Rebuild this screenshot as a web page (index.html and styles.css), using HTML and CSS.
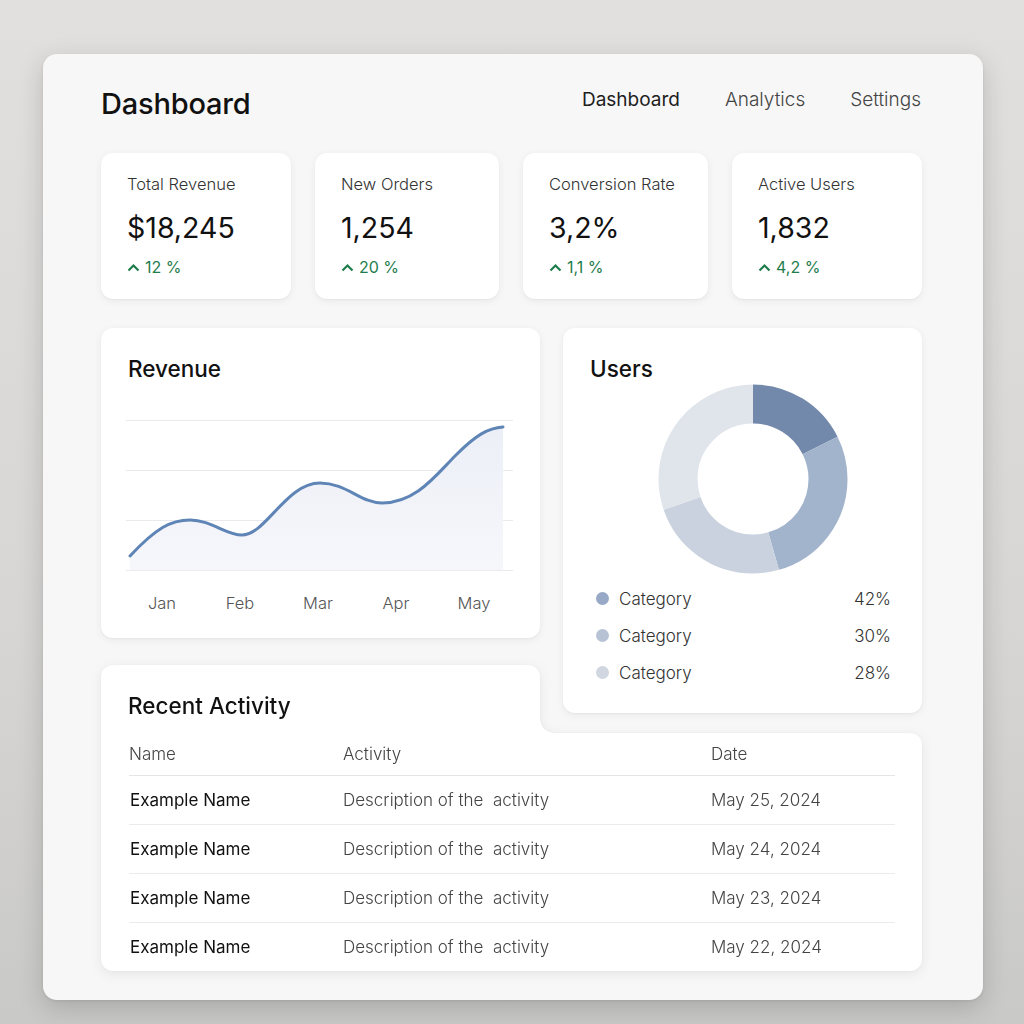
FILE: index.html
```html
<!DOCTYPE html>
<html lang="en">
<head>
<meta charset="utf-8">
<title>Dashboard</title>
<link rel="stylesheet" href="styles.css">
</head>
<body>
<div class="panel">
  <header class="top">
    <h1 class="title">Dashboard</h1>
    <nav class="nav">
      <span class="nav-item active">Dashboard</span>
      <span class="nav-item">Analytics</span>
      <span class="nav-item">Settings</span>
    </nav>
  </header>

  <section class="stats">
    <div class="stat">
      <div class="stat-label">Total Revenue</div>
      <div class="stat-value">$18,245</div>
      <div class="stat-change"><svg class="chev" width="13" height="9" viewBox="0 0 13 9"><polyline points="1.5,7.5 6.5,2.5 11.5,7.5" fill="none" stroke="currentColor" stroke-width="2.2"/></svg><span>12 %</span></div>
    </div>
    <div class="stat">
      <div class="stat-label">New Orders</div>
      <div class="stat-value">1,254</div>
      <div class="stat-change"><svg class="chev" width="13" height="9" viewBox="0 0 13 9"><polyline points="1.5,7.5 6.5,2.5 11.5,7.5" fill="none" stroke="currentColor" stroke-width="2.2"/></svg><span>20 %</span></div>
    </div>
    <div class="stat">
      <div class="stat-label">Conversion Rate</div>
      <div class="stat-value">3,2%</div>
      <div class="stat-change"><svg class="chev" width="13" height="9" viewBox="0 0 13 9"><polyline points="1.5,7.5 6.5,2.5 11.5,7.5" fill="none" stroke="currentColor" stroke-width="2.2"/></svg><span>1,1 %</span></div>
    </div>
    <div class="stat">
      <div class="stat-label">Active Users</div>
      <div class="stat-value">1,832</div>
      <div class="stat-change"><svg class="chev" width="13" height="9" viewBox="0 0 13 9"><polyline points="1.5,7.5 6.5,2.5 11.5,7.5" fill="none" stroke="currentColor" stroke-width="2.2"/></svg><span>4,2 %</span></div>
    </div>
  </section>

  <section class="content">
    <div class="card revenue">
      <h2 class="card-title">Revenue</h2>
      <svg class="chart" width="387" height="165" viewBox="0 0 387 165">
        <defs>
          <linearGradient id="area" x1="0" y1="0" x2="0" y2="1">
            <stop offset="0" stop-color="#eceff7"/>
            <stop offset="1" stop-color="#f6f7fb"/>
          </linearGradient>
        </defs>
        <line x1="0" y1="10.5" x2="387" y2="10.5" class="grid"/>
        <line x1="0" y1="60.5" x2="387" y2="60.5" class="grid"/>
        <line x1="0" y1="110.5" x2="387" y2="110.5" class="grid"/>
        <path d="M4,146 C30,118 45,110 64,110 C85,110 100,125 116,125 C140,125 160,73 194,73 C220,73 235,93 256,93 C290,93 310,65 330,45 C350,25 362,18 377,17 L377,160 L4,160 Z" fill="url(#area)"/>
        <line x1="0" y1="160.5" x2="387" y2="160.5" class="grid"/>
        <path d="M4,146 C30,118 45,110 64,110 C85,110 100,125 116,125 C140,125 160,73 194,73 C220,73 235,93 256,93 C290,93 310,65 330,45 C350,25 362,18 377,17" fill="none" stroke="#5f84b6" stroke-width="3" stroke-linecap="round"/>
      </svg>
      <div class="months">
        <span>Jan</span><span>Feb</span><span>Mar</span><span>Apr</span><span>May</span>
      </div>
    </div>

    <div class="card users">
      <h2 class="card-title">Users</h2>
      <svg class="donut" width="190" height="190" viewBox="0 0 190 190">
        <g transform="rotate(-90 95 95)" fill="none" stroke-width="39">
          <circle cx="95" cy="95" r="75" pathLength="360" stroke="#7389ab" stroke-dasharray="63.4 296.6" stroke-dashoffset="0"/>
          <circle cx="95" cy="95" r="75" pathLength="360" stroke="#a2b3cc" stroke-dasharray="100.6 259.4" stroke-dashoffset="-63.4"/>
          <circle cx="95" cy="95" r="75" pathLength="360" stroke="#c9d2de" stroke-dasharray="87 273" stroke-dashoffset="-164"/>
          <circle cx="95" cy="95" r="75" pathLength="360" stroke="#e0e4eb" stroke-dasharray="109 251" stroke-dashoffset="-251"/>
        </g>
      </svg>
      <div class="legend">
        <div class="legend-row"><span class="dot d1"></span><span>Category</span><span class="pct">42%</span></div>
        <div class="legend-row"><span class="dot d2"></span><span>Category</span><span class="pct">30%</span></div>
        <div class="legend-row"><span class="dot d3"></span><span>Category</span><span class="pct">28%</span></div>
      </div>
    </div>

    <div class="activity">
      <div class="activity-head">
        <h2 class="card-title">Recent Activity</h2>
      </div>
      <div class="activity-body">
        <table class="table">
          <colgroup><col class="c1"><col class="c2"><col class="c3"></colgroup>
          <thead>
            <tr><th>Name</th><th>Activity</th><th>Date</th></tr>
          </thead>
          <tbody>
            <tr><td class="name">Example Name</td><td>Description of the&nbsp; activity</td><td>May 25, 2024</td></tr>
            <tr><td class="name">Example Name</td><td>Description of the&nbsp; activity</td><td>May 24, 2024</td></tr>
            <tr><td class="name">Example Name</td><td>Description of the&nbsp; activity</td><td>May 23, 2024</td></tr>
            <tr><td class="name">Example Name</td><td>Description of the&nbsp; activity</td><td>May 22, 2024</td></tr>
          </tbody>
        </table>
      </div>
    </div>
  </section>
</div>
</body>
</html>
```

FILE: styles.css
```css
html, body {
  margin: 0;
  padding: 0;
}

body {
  width: 1024px;
  height: 1024px;
  overflow: hidden;
  box-sizing: border-box;
  padding: 54px 0 0 43px;
  background: linear-gradient(180deg, #e1e0df 0%, #d7d6d5 60%, #c9c9c8 100%);
  font-family: Inter, "Noto Sans", "Liberation Sans", sans-serif;
  color: #111;
}

.panel {
  width: 940px;
  height: 946px;
  box-sizing: border-box;
  padding: 30px 61px 0 58px;
  background: #f7f7f7;
  border-radius: 14px;
  box-shadow: 0 8px 26px rgba(0, 0, 0, 0.17), 0 1px 3px rgba(0, 0, 0, 0.08);
}

/* Header */
.top {
  display: flex;
  justify-content: space-between;
  align-items: flex-start;
  height: 40px;
  margin-bottom: 29px;
}

.title {
  margin: 0;
  font-size: 29px;
  line-height: 40px;
  font-weight: 500;
  color: #111;
  letter-spacing: -0.2px;
}

.nav {
  display: flex;
  gap: 45px;
  padding-top: 1px;
  margin-right: 1px;
  font-size: 19px;
  line-height: 30px;
  font-weight: 300;
  color: #444;
}

.nav-item.active {
  color: #1e1e1e;
  font-weight: 400;
}

/* Stat cards */
.stats {
  display: grid;
  grid-template-columns: 190px 184px 185px 190px;
  gap: 24px;
}

.stat {
  height: 146px;
  box-sizing: border-box;
  padding: 20px 16px 0 26px;
  background: #fff;
  border-radius: 12px;
  box-shadow: 0 2px 8px rgba(0, 0, 0, 0.06), 0 1px 2px rgba(0, 0, 0, 0.04);
}

.stat-label {
  font-size: 16.5px;
  line-height: 22px;
  font-weight: 300;
  color: #333;
}

.stat-value {
  margin-top: 15px;
  font-size: 28.5px;
  line-height: 36px;
  font-weight: 400;
  color: #111;
}

.stat-change {
  margin-top: 11px;
  display: flex;
  align-items: center;
  gap: 5px;
  font-size: 16px;
  line-height: 20px;
  font-weight: 400;
  color: #1f7d4d;
}

.chev {
  display: block;
}

/* Content grid */
.content {
  display: grid;
  grid-template-columns: 439px 359px;
  column-gap: 23px;
  row-gap: 27px;
  margin-top: 29px;
}

.card {
  background: #fff;
  border-radius: 12px;
  box-shadow: 0 2px 8px rgba(0, 0, 0, 0.06), 0 1px 2px rgba(0, 0, 0, 0.04);
  box-sizing: border-box;
}

.card-title {
  margin: 0;
  font-size: 22.5px;
  line-height: 28px;
  font-weight: 500;
  color: #111;
}

/* Revenue */
.revenue {
  grid-column: 1;
  grid-row: 1;
  height: 310px;
  padding: 27px 27px 0 27px;
}

.chart {
  display: block;
  margin: 27px 0 0 -2px;
}

.grid {
  stroke: #e9e9ee;
  stroke-width: 1;
}

.months {
  display: grid;
  grid-template-columns: repeat(5, 78px);
  margin: 17px 0 0 -5px;
  font-size: 16.5px;
  line-height: 22px;
  font-weight: 300;
  color: #555;
  text-align: center;
}

/* Users */
.users {
  grid-column: 2;
  grid-row: 1 / span 2;
  align-self: start;
  height: 385px;
  padding: 27px 31px 0 27px;
  position: relative;
  z-index: 1;
}

.donut {
  display: block;
  margin: 1px 0 0 68px;
}

.legend {
  margin-top: 6px;
  padding-left: 6px;
}

.legend-row {
  display: flex;
  align-items: center;
  height: 37px;
  font-size: 17px;
  font-weight: 300;
  color: #333;
}

.dot {
  width: 13px;
  height: 13px;
  border-radius: 50%;
  margin-right: 10px;
}

.d1 { background: #97a9c6; }
.d2 { background: #b7c3d4; }
.d3 { background: #d0d7e1; }

.pct {
  margin-left: auto;
}

/* Recent activity */
.activity {
  grid-column: 1 / span 2;
  grid-row: 2;
  filter: drop-shadow(0 3px 6px rgba(0, 0, 0, 0.07)) drop-shadow(0 0 1px rgba(0, 0, 0, 0.04));
}

.activity-head {
  position: relative;
  width: 439px;
  height: 68px;
  box-sizing: border-box;
  padding: 27px 27px 0;
  background: #fff;
  border-radius: 12px 12px 0 0;
}

.activity-head::after {
  content: "";
  position: absolute;
  left: 100%;
  bottom: 0;
  width: 14px;
  height: 14px;
  background: radial-gradient(circle at 100% 0, rgba(255, 255, 255, 0) 13.5px, #fff 14px);
}

.activity-body {
  background: #fff;
  border-radius: 0 12px 12px 12px;
  padding: 0 27px 0 28px;
}

.table {
  width: 100%;
  border-collapse: collapse;
}

.c1 { width: 214px; }
.c2 { width: 368px; }

.table th,
.table td {
  padding: 0;
  text-align: left;
  font-size: 17px;
  font-weight: 300;
  color: #444;
}

.table thead th {
  height: 42px;
  border-bottom: 1px solid #e5e5e5;
}

.table tbody td {
  height: 48px;
  border-bottom: 1px solid #ebebeb;
}

.table tbody tr:last-child td {
  height: 48px;
  border-bottom: none;
}

.table td.name {
  color: #111;
  font-weight: 400;
  padding-left: 1px;
}
```
